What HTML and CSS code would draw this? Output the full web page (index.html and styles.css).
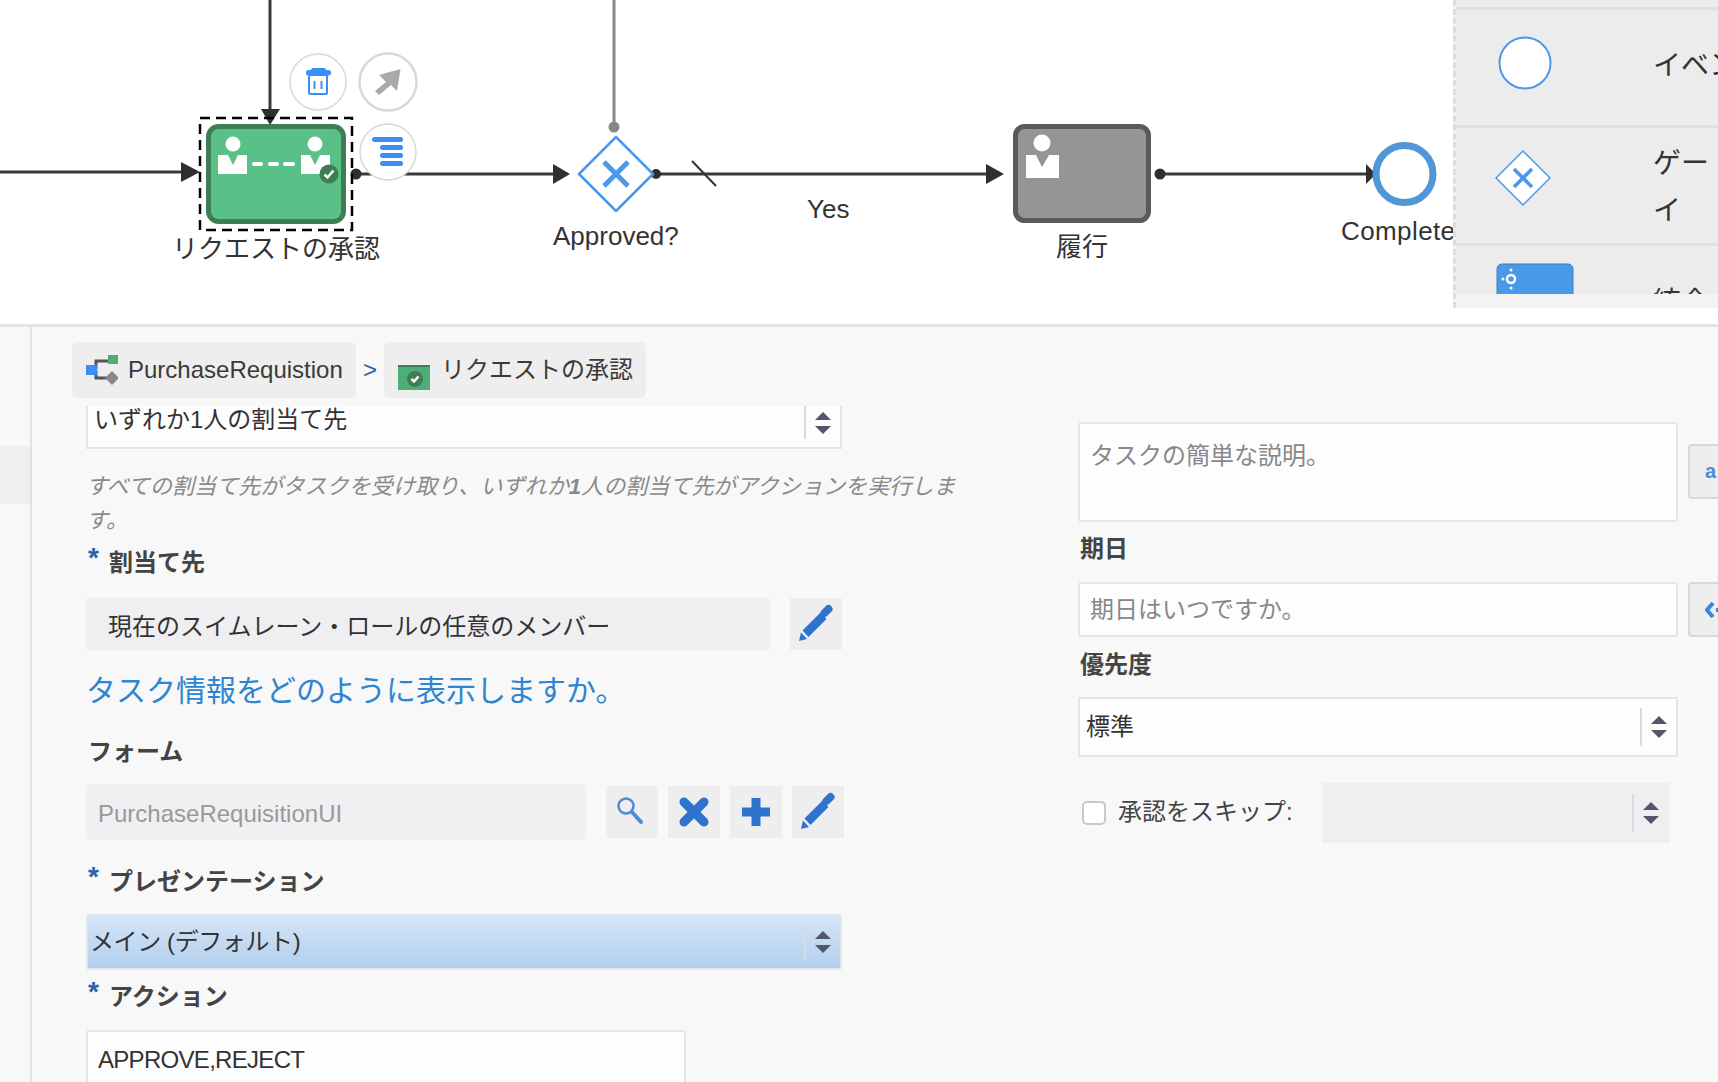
FILE: index.html
```html
<!DOCTYPE html>
<html lang="ja">
<head>
    <meta charset="utf-8">
    <title>リクエストの承認</title>
    <link rel="stylesheet" href="styles.css">
</head>
<body>
    <svg class="defs">
        <symbol id="pencil" viewBox="0 0 52 52">
            <polygon points="12.500,32.500 18.500,39 36.500,21 30.500,14.500"/>
            <polygon points="9,43 11,34.500 17,41"/>
            <line x1="34.500" y1="15" x2="38.500" y2="11" stroke="currentColor" stroke-width="8" stroke-linecap="round"/>
        </symbol>
    </svg>

    <div class="diagram">
        <svg class="canvas" width="1718" height="324">
            <g class="edge">
                <line x1="0" y1="172" x2="184" y2="172"/>
                <line x1="270" y1="0" x2="270" y2="112"/>
                <line x1="356" y1="174" x2="556" y2="174"/>
                <line x1="656" y1="174" x2="988" y2="174"/>
                <line x1="1160" y1="174" x2="1372" y2="174"/>
                <line class="thin" x1="692" y1="161" x2="716" y2="186"/>
            </g>
            <g class="head">
                <polygon points="181,162 200,172 181,182"/>
                <polygon points="261,109 280,109 270,125"/>
                <polygon points="553,164 570,174 553,184"/>
                <polygon points="986,164 1004,174 986,184"/>
                <polygon points="1366,164 1376,174 1366,184"/>
                <circle cx="356" cy="174" r="5.5"/>
                <circle cx="656" cy="174" r="5"/>
                <circle cx="1160" cy="174" r="5.5"/>
            </g>
            <line class="edge-gray" x1="614" y1="0" x2="614" y2="127"/>
            <circle class="dot-gray" cx="614" cy="127" r="5.5"/>

            <rect class="select-box" x="200" y="118" width="152" height="112"/>
            <rect class="task-green" x="208.500" y="126.500" width="135" height="95" rx="10"/>
            <g class="white">
                <circle cx="233" cy="144" r="7.500"/>
                <polygon points="218,155 228,155 233,165 238,155 247,155 247,174 218,174"/>
                <circle cx="315" cy="144" r="7.500"/>
                <polygon points="301,155 310,155 315,165 320,155 330,155 330,174 301,174"/>
                <rect x="252" y="162" width="11" height="4" rx="2"/>
                <rect x="268" y="162" width="11" height="4" rx="2"/>
                <rect x="283" y="162" width="12" height="4" rx="2"/>
            </g>
            <circle class="badge" cx="329" cy="174" r="9.500"/>
            <polyline class="check" points="324.500,174.500 327.500,177.500 333.500,170.500"/>

            <circle class="tool" cx="318" cy="82" r="28"/>
            <circle class="tool tool-thick" cx="388" cy="82" r="28.500"/>
            <circle class="tool" cx="388" cy="152" r="28"/>
            <rect class="blue" x="306" y="70" width="25" height="5.500" rx="2.500"/>
            <rect class="blue" x="311" y="68" width="15" height="4" rx="2"/>
            <rect class="trash" x="309" y="75" width="18" height="19" rx="1.500"/>
            <line class="trash" x1="314.500" y1="81" x2="314.500" y2="89"/>
            <line class="trash" x1="321.500" y1="81" x2="321.500" y2="89"/>
            <polygon class="gray-arrow" points="400.500,69 379,75 386,82 375,91 379,95 391,85 397,91"/>
            <rect class="blue" x="372" y="137" width="31" height="5" rx="2.500"/>
            <rect class="blue" x="380" y="145" width="23" height="5" rx="2.500"/>
            <rect class="blue" x="380" y="153" width="23" height="5" rx="2.500"/>
            <rect class="blue" x="380" y="161" width="23" height="5" rx="2.500"/>

            <polygon class="gateway" points="616,137 653,174 616,211 579,174" />
            <line class="gateway-x" x1="604" y1="162" x2="628" y2="186"/>
            <line class="gateway-x" x1="628" y1="162" x2="604" y2="186"/>

            <rect class="task-gray" x="1015.500" y="126.500" width="133" height="94" rx="9"/>
            <g class="white">
                <circle cx="1042" cy="143" r="8.500"/>
                <polygon points="1026,155 1036,155 1042,167 1049,155 1059,155 1059,178 1026,178"/>
            </g>
            <circle class="end-event" cx="1404.500" cy="174" r="28.500"/>
        </svg>

        <div class="node-label label-approve">リクエストの承認</div>
        <div class="node-label label-gateway">Approved?</div>
        <div class="node-label label-yes">Yes</div>
        <div class="node-label label-fulfil">履行</div>
        <div class="node-label label-complete">Complete</div>

        <div class="palette">
            <div class="palette-list">
                <div class="palette-stub"></div>
                <div class="palette-row row-event">
                    <svg class="palette-icon" width="76" height="56">
                        <circle class="pal-circle" cx="28" cy="27" r="25.500"/>
                    </svg>
                    <div class="palette-text">イベント</div>
                </div>
                <div class="palette-row row-gateway">
                    <svg class="palette-icon" width="76" height="56">
                        <polygon class="pal-diamond" points="26,1 53,28 26,55 -1,28"/>
                        <line class="pal-x" x1="17" y1="19" x2="35" y2="37"/>
                        <line class="pal-x" x1="35" y1="19" x2="17" y2="37"/>
                    </svg>
                    <div class="palette-text">ゲートウェ<br>イ</div>
                </div>
                <div class="palette-row row-join">
                    <svg class="palette-icon" width="76" height="40">
                        <rect class="pal-task" x="0" y="0" width="76" height="50" rx="5"/>
                        <circle class="pal-gear" cx="14" cy="15" r="4"/>
                        <circle class="white" cx="6" cy="15" r="1.500"/>
                        <circle class="white" cx="14" cy="6" r="1.500"/>
                        <circle class="white" cx="14" cy="24" r="1.500"/>
                    </svg>
                    <div class="palette-text">統合</div>
                </div>
            </div>
        </div>
    </div>

    <div class="lower">
        <div class="sidebar"><div class="sidebar-item"></div></div>
        <div class="main">
            <div class="crumbs">
                <div class="crumb crumb-process">
                    <svg width="32" height="30">
                        <path class="crumb-line" d="M10 14 V6 H24 M10 15 V23 H26"/>
                        <rect class="crumb-blue" x="0" y="10" width="11" height="10"/>
                        <rect class="crumb-green" x="22" y="0" width="10" height="9"/>
                        <polygon class="crumb-gray" points="26,16 33,23 26,30 19,23"/>
                    </svg>
                    <span>PurchaseRequistion</span>
                </div>
                <div class="crumb-sep">&gt;</div>
                <div class="crumb crumb-task">
                    <svg width="32" height="25">
                        <rect class="crumb-green2" x="0" y="0" width="32" height="25"/>
                        <rect class="crumb-top" x="0" y="0" width="32" height="2"/>
                        <circle class="crumb-badge" cx="17" cy="14" r="8"/>
                        <polyline class="check" points="13.500,14 16,16.500 20.500,11.500"/>
                    </svg>
                    <span>リクエストの承認</span>
                </div>
            </div>

            <div class="form">
                <div class="col-left">
                    <div class="select select-clipped">
                        <div class="select-text">いずれか1人の割当て先</div>
                        <div class="arrows"><i class="up"></i><i class="down"></i></div>
                    </div>
                    <p class="help">すべての割当て先がタスクを受け取り、いずれか<b>1</b>人の割当て先がアクションを実行しま<br>す。</p>
                    <div class="label label-assignee"><span class="req">*</span>割当て先</div>
                    <div class="row row-assignee">
                        <div class="readonly">現在のスイムレーン・ロールの任意のメンバー</div>
                        <div class="icon-btn"><svg width="52" height="52"><use href="#pencil"/></svg></div>
                    </div>
                    <h2 class="section-link">タスク情報をどのように表示しますか。</h2>
                    <div class="label label-form">フォーム</div>
                    <div class="row row-form">
                        <div class="readonly readonly-form">PurchaseRequisitionUI</div>
                        <div class="icon-btn">
                            <svg width="52" height="52">
                                <circle class="ico-search" cx="20" cy="20" r="7.500"/>
                                <line class="ico-handle" x1="26" y1="26" x2="35" y2="36"/>
                            </svg>
                        </div>
                        <div class="icon-btn">
                            <svg width="52" height="52">
                                <line class="ico-bold" x1="16" y1="16" x2="36" y2="36"/>
                                <line class="ico-bold" x1="36" y1="16" x2="16" y2="36"/>
                            </svg>
                        </div>
                        <div class="icon-btn">
                            <svg width="52" height="52">
                                <line class="ico-plus" x1="12" y1="26" x2="40" y2="26"/>
                                <line class="ico-plus" x1="26" y1="12" x2="26" y2="40"/>
                            </svg>
                        </div>
                        <div class="icon-btn"><svg width="52" height="52"><use href="#pencil"/></svg></div>
                    </div>
                    <div class="label label-present"><span class="req">*</span>プレゼンテーション</div>
                    <div class="select select-blue">
                        <div class="select-text">メイン (デフォルト)</div>
                        <div class="arrows"><i class="up"></i><i class="down"></i></div>
                    </div>
                    <div class="label label-action"><span class="req">*</span>アクション</div>
                    <input class="text-input input-action" type="text" value="APPROVE,REJECT">
                </div>

                <div class="col-right">
                    <div class="with-btn">
                        <textarea class="text-input area-desc" placeholder="タスクの簡単な説明。"></textarea>
                        <div class="side-btn side-btn-text">a</div>
                    </div>
                    <div class="label label-due">期日</div>
                    <div class="with-btn due-row">
                        <input class="text-input input-due" type="text" placeholder="期日はいつですか。">
                        <div class="side-btn">
                            <svg width="20" height="20">
                                <polyline class="ico-back" points="8,3 2,10 8,17"/>
                                <line class="ico-back" x1="11" y1="10" x2="20" y2="10"/>
                            </svg>
                        </div>
                    </div>
                    <div class="label label-priority">優先度</div>
                    <div class="select select-priority">
                        <div class="select-text">標準</div>
                        <div class="arrows"><i class="up"></i><i class="down"></i></div>
                    </div>
                    <div class="skip-row">
                        <input class="skip-check" type="checkbox">
                        <span class="skip-label">承認をスキップ:</span>
                        <div class="select select-disabled">
                            <div class="select-text"></div>
                            <div class="arrows"><i class="up"></i><i class="down"></i></div>
                        </div>
                    </div>
                </div>
            </div>
        </div>
    </div>
</body>
</html>
```

FILE: styles.css
```css
* {
    box-sizing: border-box;
}

body {
    margin: 0;
    height: 1082px;
    overflow: hidden;
    background-color: #f8f8f8;
    color: #333;
    font-family: "Liberation Sans", "Noto Sans CJK JP", sans-serif;
    font-size: 24px;
}

.defs {
    position: absolute;
    width: 0;
    height: 0;
}

/* diagram */
.diagram {
    position: relative;
    height: 327px;
    background-color: white;
    border-bottom: 3px solid #e4e4e4;
    overflow: hidden;
}

.canvas {
    display: block;
}

.edge line {
    stroke: #3a3a3a;
    stroke-width: 3;
}

.edge .thin {
    stroke: #333;
    stroke-width: 2;
}

.head {
    fill: #2f2f2f;
}

.edge-gray {
    stroke: #888;
    stroke-width: 3;
}

.dot-gray {
    fill: #888;
}

.select-box {
    fill: none;
    stroke: black;
    stroke-width: 2.5;
    stroke-dasharray: 10 6;
}

.task-green {
    fill: #59c187;
    stroke: #3f7d55;
    stroke-width: 5;
}

.task-gray {
    fill: #959595;
    stroke: #5a5a5a;
    stroke-width: 5;
}

.white {
    fill: white;
}

.badge {
    fill: #3f7d55;
}

.check {
    fill: none;
    stroke: white;
    stroke-width: 2.5;
}

.tool {
    fill: white;
    stroke: #d8d8d8;
    stroke-width: 1.5;
}

.tool-thick {
    stroke-width: 2.5;
}

.blue {
    fill: #3b8ef5;
}

.trash {
    fill: none;
    stroke: #3b8ef5;
    stroke-width: 2;
}

.gray-arrow {
    fill: #aaa;
}

.gateway {
    fill: white;
    stroke: #4a98e8;
    stroke-width: 2.5;
    stroke-linejoin: round;
}

.gateway-x {
    stroke: #4a98e8;
    stroke-width: 5;
}

.end-event {
    fill: white;
    stroke: #4f97d6;
    stroke-width: 7;
}

.node-label {
    position: absolute;
    font-size: 26px;
    line-height: 34px;
    white-space: nowrap;
    color: #333;
}

.label-approve { left: 172px; top: 232px; }
.label-gateway { left: 553px; top: 219px; }
.label-yes { left: 807px; top: 192px; }
.label-fulfil { left: 1056px; top: 230px; }
.label-complete { left: 1341px; top: 214px; letter-spacing: 0.4px; }

/* palette on the right */
.palette {
    position: absolute;
    left: 1453px;
    top: 0;
    width: 265px;
    height: 308px;
    background-color: #f3f3f3;
    border-left: 3px dashed #ddd;
}

.palette-list {
    height: 294px;
    background-color: #ececec;
    overflow: hidden;
}

.palette-stub {
    height: 10px;
    border-bottom: 3px solid #e0e0e0;
}

.palette-row {
    display: flex;
    height: 118px;
    padding-left: 41px;
    border-bottom: 3px solid #e0e0e0;
}

.palette-icon {
    flex: none;
    width: 76px;
    overflow: visible;
}

.palette-text {
    margin-left: 80px;
    font-size: 28px;
    line-height: 47px;
    white-space: nowrap;
    color: #333;
}

.row-event .palette-icon { margin-top: 26px; }
.row-event .palette-text { margin-top: 32px; }
.row-gateway .palette-icon { margin-top: 22px; }
.row-gateway .palette-text { margin-top: 12px; }
.row-join .palette-icon { margin-top: 18px; }
.row-join .palette-text { margin-top: 33px; }

.pal-circle {
    fill: white;
    stroke: #4a98e8;
    stroke-width: 2;
}

.pal-diamond {
    fill: white;
    stroke: #4a98e8;
    stroke-width: 1.5;
    stroke-linejoin: round;
}

.pal-x {
    stroke: #4a98e8;
    stroke-width: 3.5;
}

.pal-task {
    fill: #4a98e8;
    stroke: #3b7fc8;
    stroke-width: 1;
}

.pal-gear {
    fill: none;
    stroke: white;
    stroke-width: 2.5;
}

/* lower part */
.lower {
    display: flex;
    height: 755px;
    overflow: hidden;
}

.sidebar {
    flex: none;
    width: 32px;
    padding-top: 119px;
    border-right: 2px solid #e2e2e2;
}

.sidebar-item {
    height: 58px;
    background-color: #efefef;
}

.main {
    flex: 1;
    min-width: 0;
}

.crumbs {
    display: flex;
    height: 79px;
    padding: 15px 0 8px 40px;
}

.crumb {
    display: flex;
    align-items: center;
    height: 56px;
    background-color: #eee;
    border-radius: 5px;
    color: #3a3a3a;
}

.crumb-process {
    width: 284px;
    padding-left: 14px;
}

.crumb-process span {
    margin-left: 10px;
}

.crumb-task {
    width: 262px;
    padding-left: 14px;
}

.crumb-task svg {
    margin-top: 14px;
}

.crumb-task span {
    margin-left: 11px;
    margin-top: -6px;
}

.crumb-sep {
    width: 28px;
    padding-top: 14px;
    text-align: center;
    color: #2a62a8;
}

.crumb-line {
    fill: none;
    stroke: #555;
    stroke-width: 3;
}

.crumb-blue { fill: #3b8ef5; }
.crumb-green { fill: #4fae78; }
.crumb-gray { fill: #888; }
.crumb-green2 { fill: #4fae78; }
.crumb-top { fill: #3f7d55; }
.crumb-badge { fill: #3f7d55; }

.form {
    display: flex;
    padding-left: 54px;
}

.col-left {
    flex: none;
    width: 992px;
}

.col-right {
    flex: none;
    width: 640px;
    padding-top: 16px;
    overflow: hidden;
}

/* selects */
.select {
    display: flex;
    align-items: center;
    background-color: #fdfdfe;
    border: 2px solid #e2e6e9;
}

.select-text {
    flex: 1;
    color: #333;
}

.arrows {
    display: flex;
    flex-direction: column;
    align-items: center;
    justify-content: center;
    gap: 6px;
    flex: none;
    width: 36px;
    height: 38px;
    border-left: 2px solid #d7dbe0;
}

.arrows i {
    display: block;
    width: 0;
    height: 0;
    border-left: 8px solid transparent;
    border-right: 8px solid transparent;
}

.arrows .up {
    border-bottom: 8px solid #55556a;
}

.arrows .down {
    border-top: 8px solid #55556a;
}

.select-clipped {
    width: 756px;
    height: 43px;
    align-items: flex-start;
    padding-left: 6px;
    border-top: none;
}

.select-clipped .select-text {
    line-height: 28px;
}

.select-clipped .arrows {
    height: 33px;
}

.select-blue {
    width: 756px;
    height: 56px;
    margin-top: 15px;
    padding-left: 2px;
    background: linear-gradient(#d5e5f6, #b2cfee);
    border-radius: 3px;
}

.select-blue .select-text {
    padding-bottom: 6px;
    letter-spacing: -0.4px;
}

.select-priority {
    width: 600px;
    height: 60px;
    margin-top: 15px;
    padding-left: 6px;
}

.select-priority .select-text {
    padding-bottom: 6px;
}

.select-disabled {
    flex: none;
    width: 348px;
    height: 60px;
    margin-left: 24px;
    background-color: #efeff1;
    border: none;
}

.select-disabled .arrows {
    margin-right: 2px;
}

/* left column */
.help {
    margin: 21px 0 -1px;
    font-size: 22.1px;
    line-height: 34px;
    font-style: italic;
    color: #8a8a8a;
}

.label {
    height: 34px;
    padding-left: 2px;
    line-height: 34px;
    font-weight: bold;
    color: #444;
}

.req {
    display: inline-block;
    width: 21px;
    font-family: "Liberation Sans", sans-serif;
    font-size: 28px;
    line-height: 0;
    color: #2a62a8;
    vertical-align: 4px;
}

.label-assignee { margin-top: 9px; }
.label-form { margin-top: 22px; }
.label-present { margin-top: 25px; }
.label-action { margin-top: 10px; }
.label-due { margin-top: 10px; }
.label-priority { margin-top: 11px; }

.row {
    display: flex;
    align-items: center;
}

.row-assignee {
    gap: 20px;
    width: 756px;
    margin-top: 18px;
}

.row-form {
    margin-top: 15px;
    gap: 10px;
}

.readonly {
    display: flex;
    align-items: center;
    width: 684px;
    height: 52px;
    padding-left: 22px;
    background-color: #efeff1;
    color: #333;
}

.readonly-form {
    width: 500px;
    height: 56px;
    margin-right: 10px;
    padding-left: 12px;
    padding-top: 4px;
    background-color: #f0f0f2;
    border-radius: 4px;
    color: #999;
}

.icon-btn {
    flex: none;
    width: 52px;
    height: 52px;
    background-color: #eee;
    color: #2f74cc;
    fill: #2f74cc;
}

.icon-btn svg {
    display: block;
}

.ico-search {
    fill: none;
    stroke: #4d8ad8;
    stroke-width: 2.5;
}

.ico-handle {
    stroke: #4d8ad8;
    stroke-width: 4;
    stroke-linecap: round;
}

.ico-bold {
    stroke: #2f74cc;
    stroke-width: 9;
    stroke-linecap: round;
}

.ico-plus {
    stroke: #2f74cc;
    stroke-width: 9;
}

.section-link {
    margin: 19px 0 0;
    font-size: 30px;
    font-weight: normal;
    line-height: 44px;
    color: #2e86d0;
}

/* inputs */
.text-input {
    display: block;
    flex: none;
    width: 600px;
    border: 2px solid #e2e6e9;
    border-radius: 3px;
    background-color: #fdfdfe;
    font-family: inherit;
    font-size: 24px;
    color: #333;
    outline: none;
}

.text-input::placeholder {
    color: #888;
    opacity: 1;
}

.input-action {
    height: 80px;
    margin-top: 16px;
    padding: 0 10px 20px;
    letter-spacing: -0.7px;
}

.area-desc {
    height: 100px;
    padding: 12px 10px 0;
    resize: none;
}

.input-due {
    height: 55px;
    padding: 0 10px;
}

.with-btn {
    display: flex;
    align-items: flex-start;
    gap: 10px;
}

.due-row {
    margin-top: 16px;
}

.with-btn .side-btn {
    flex: none;
    display: flex;
    align-items: center;
    width: 60px;
    height: 55px;
    padding-left: 15px;
    background-color: #eee;
    border: 2px solid #d5d9dc;
    border-radius: 4px;
}

.with-btn .area-desc + .side-btn {
    margin-top: 22px;
}

.side-btn-text {
    font-size: 20px;
    font-weight: bold;
    color: #4d8ad8;
}

.ico-back {
    fill: none;
    stroke: #3d84da;
    stroke-width: 4;
}

/* skip row */
.skip-row {
    display: flex;
    align-items: center;
    height: 60px;
    margin-top: 26px;
}

.skip-check {
    appearance: none;
    flex: none;
    width: 24px;
    height: 24px;
    margin: 0 0 0 4px;
    background-color: white;
    border: 2px solid #c8c8c8;
    border-radius: 5px;
}

.skip-label {
    flex: none;
    width: 180px;
    margin-left: 12px;
    margin-top: -7px;
    color: #444;
    white-space: nowrap;
}
```
